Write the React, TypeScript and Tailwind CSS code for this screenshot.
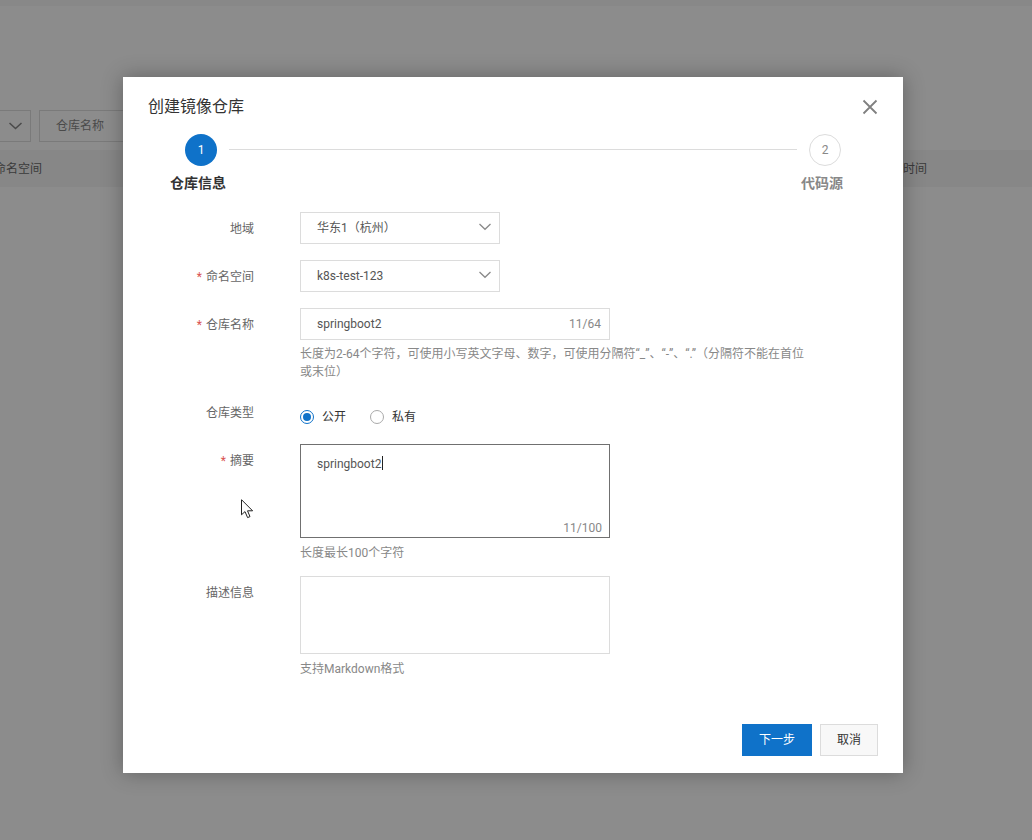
import React from "react";

const FONT = "font-['Roboto','Noto_Sans_CJK_SC',sans-serif]";

function Chevron() {
  return (
    <svg width="12" height="8" viewBox="0 0 12 8" fill="none" className="mb-[2px] shrink-0">
      <path d="M0.5 1 L6 6.3 L11.5 1" stroke="#8a8a8a" strokeWidth="1.3" />
    </svg>
  );
}

function Row({ label, required, children, className }: { label: string; required?: boolean; children: React.ReactNode; className?: string }) {
  return (
    <div className={"flex items-start " + (className ?? "")}>
      <div className="w-[131px] shrink-0 pt-[8px] text-right text-[12px] leading-[18px] text-[#666666]">
        {required && <span className="mr-[4px] text-[#d9534f]">*</span>}
        {label}
      </div>
      <div className="ml-[46px] min-w-0 flex-1">{children}</div>
    </div>
  );
}

function Select({ value }: { value: string }) {
  return (
    <div className="flex h-[32px] w-[200px] items-center justify-between border border-[#dcdcdc] pl-[16px] pr-[8px] text-[12px] text-[#555555]">
      <span>{value}</span>
      <Chevron />
    </div>
  );
}

function Help({ children, tight }: { children: React.ReactNode; tight?: boolean }) {
  return (
    <div className={(tight ? "mt-[5px] " : "mt-[6px] ") + "w-[510px] text-[12px] leading-[18px] text-[#888888] [text-spacing-trim:space-all]"}>
      {children}
    </div>
  );
}

export default function App() {
  return (
    <div className={"relative h-[840px] w-[1032px] overflow-hidden bg-[#8c8c8c] " + FONT}>
      {/* Dimmed page behind the dialog */}
      <div className="h-[6px] bg-[#888888]" />
      <div className="ml-[-10px] mt-[104px] flex gap-[8px]">
        <div className="flex h-[32px] w-[41px] items-center justify-end border border-[#7a7a7a] pr-[8px]">
          <svg width="13" height="8" viewBox="0 0 13 8" fill="none">
            <path d="M0.5 1 L6.5 6.5 L12.5 1" stroke="#4a4a4a" strokeWidth="1.5" />
          </svg>
        </div>
        <div className="flex h-[32px] w-[120px] items-center border border-[#7a7a7a] pl-[16px] text-[12px] text-[#4a4a4a]">仓库名称</div>
      </div>
      <div className="mt-[8px] flex h-[37px] items-center justify-between bg-[#878787] text-[12px] text-[#3a3a3a]">
        <span className="ml-[-6px]">命名空间</span>
        <span className="mr-[105px]">时间</span>
      </div>

      {/* Dialog */}
      <div className="absolute left-[123px] top-[77px] h-[696px] w-[780px] bg-white shadow-[0_0_20px_rgba(0,0,0,0.3)]">
        <div className="flex items-start justify-between px-[25px] pt-[19px]">
          <div className="text-[16px] leading-[22px] text-[#333333]">创建镜像仓库</div>
          <svg width="16" height="16" viewBox="0 0 16 16" fill="none" className="mt-[3px]">
            <path d="M1.5 1.5 L14.5 14.5 M14.5 1.5 L1.5 14.5" stroke="#808080" strokeWidth="1.8" />
          </svg>
        </div>

        {/* Steps */}
        <div className="mt-[16px] flex items-start pl-[47px] pr-[60px]">
          <div className="flex w-[56px] flex-col">
            <div className="ml-[15px] flex h-[32px] w-[32px] items-center justify-center rounded-full bg-[#0f72c9] text-[12px] text-white">1</div>
            <div className="mt-[7px] whitespace-nowrap text-[14px] font-bold leading-[20px] text-[#333333]">仓库信息</div>
          </div>
          <div className="ml-[3px] mr-[4px] mt-[15px] h-[1px] flex-1 bg-[#dcdcdc]" />
          <div className="flex w-[42px] flex-col">
            <div className="ml-[8px] flex h-[32px] w-[32px] items-center justify-center rounded-full border border-[#dcdcdc] text-[12px] text-[#888888]">2</div>
            <div className="mt-[7px] whitespace-nowrap text-[14px] font-bold leading-[20px] text-[#888888]">代码源</div>
          </div>
        </div>

        {/* Form */}
        <div className="mt-[19px] flex flex-col">
          <Row label="地域">
            <Select value="华东1（杭州）" />
          </Row>
          <Row label="命名空间" required className="mt-[16px]">
            <Select value="k8s-test-123" />
          </Row>
          <Row label="仓库名称" required className="mt-[16px]">
            <div className="flex h-[32px] w-[310px] items-center justify-between border border-[#dcdcdc] pl-[16px] pr-[8px] text-[12px]">
              <span className="text-[#555555]">springboot2</span>
              <span className="text-[#888888]">11/64</span>
            </div>
            <Help tight>长度为2-64个字符，可使用小写英文字母、数字，可使用分隔符“_”、“-”、“.”（分隔符不能在首位或末位）</Help>
          </Row>
          <Row label="仓库类型" className="mt-[15px]">
            <div className="flex h-[32px] items-center pt-[9px] text-[12px] text-[#333333]">
              <span className="flex h-[14px] w-[14px] items-center justify-center rounded-full border border-[#0f72c9]">
                <span className="h-[8px] w-[8px] rounded-full bg-[#0f72c9]" />
              </span>
              <span className="ml-[8px]">公开</span>
              <span className="ml-[24px] h-[14px] w-[14px] rounded-full border border-[#aaaaaa]" />
              <span className="ml-[8px]">私有</span>
            </div>
          </Row>
          <Row label="摘要" required className="mt-[16px]">
            <div className="relative h-[94px] w-[310px] border border-[#707070] pl-[16px] pt-[10px] text-[12px] leading-[18px] text-[#555555]">
              <span>springboot2</span>
              <span className="ml-[1px] inline-block h-[14px] w-[1px] bg-[#222222] align-[-2px]" />
              <span className="absolute bottom-0 right-[7px] text-[#888888]">11/100</span>
            </div>
            <Help>长度最长100个字符</Help>
          </Row>
          <Row label="描述信息" className="mt-[14px]">
            <div className="h-[78px] w-[310px] border border-[#dcdcdc]" />
            <Help>支持Markdown格式</Help>
          </Row>
        </div>

        {/* Footer */}
        <div className="absolute bottom-[17px] right-[25px] flex gap-[8px]">
          <div className="flex h-[32px] w-[70px] items-center justify-center bg-[#0f72c9] text-[12px] text-white">下一步</div>
          <div className="flex h-[32px] w-[58px] items-center justify-center border border-[#dcdcdc] bg-[#f8f8f8] text-[12px] text-[#333333]">取消</div>
        </div>
      </div>

      {/* Mouse pointer captured in the screenshot */}
      <svg width="14" height="21" viewBox="0 0 14 21" className="absolute left-[241px] top-[499px]">
        <path d="M0.5 0.7 V15.8 L4 12.6 L6.6 18.6 L9 17.6 L6.5 11.8 H11.6 Z" fill="white" stroke="#222222" strokeWidth="1" />
      </svg>
    </div>
  );
}
